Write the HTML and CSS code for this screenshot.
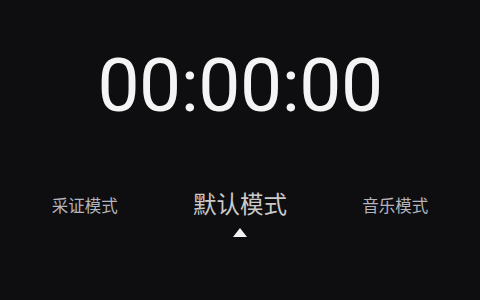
FILE: index.html
```html
<!DOCTYPE html>
<html lang="zh">
<head>
<meta charset="utf-8">
<link rel="stylesheet" href="styles.css">
</head>
<body>
<main class="screen">
  <div class="timer">00:00:00</div>
  <nav class="modes">
    <div class="mode mode-side">采证模式</div>
    <div class="mode mode-active">默认模式<span class="caret"></span></div>
    <div class="mode mode-side">音乐模式</div>
  </nav>
</main>
</body>
</html>
```
FILE: styles.css
```css
html, body {
  margin: 0;
  padding: 0;
  background: #0e0e10;
}
.screen {
  width: 480px;
  height: 300px;
  display: flex;
  flex-direction: column;
  align-items: stretch;
  font-family: Roboto, "Noto Sans CJK SC", sans-serif;
}
.timer {
  margin-top: 39px;
  height: 92px;
  line-height: 92px;
  text-align: center;
  font-family: Roboto, sans-serif;
  font-size: 75px;
  color: #f4f4f4;
  letter-spacing: -0.5px;
}
.modes {
  margin-top: 57px;
  padding: 0 7px;
  display: grid;
  grid-template-columns: repeat(3, 1fr);
  align-items: center;
}
.mode {
  position: relative;
  text-align: center;
  font-family: "Noto Sans CJK SC", sans-serif;
  font-size: 16.5px;
  line-height: 24px;
  color: #b4b4bc;
}
.mode-side {
  padding-top: 4px;
}
.mode-active {
  font-size: 23.5px;
  line-height: 30px;
  color: #cacaca;
}
.caret {
  position: absolute;
  left: 50%;
  top: 40px;
  margin-left: -7px;
  width: 0;
  height: 0;
  border-left: 7px solid transparent;
  border-right: 7px solid transparent;
  border-bottom: 9px solid #f2f2f2;
}
```
